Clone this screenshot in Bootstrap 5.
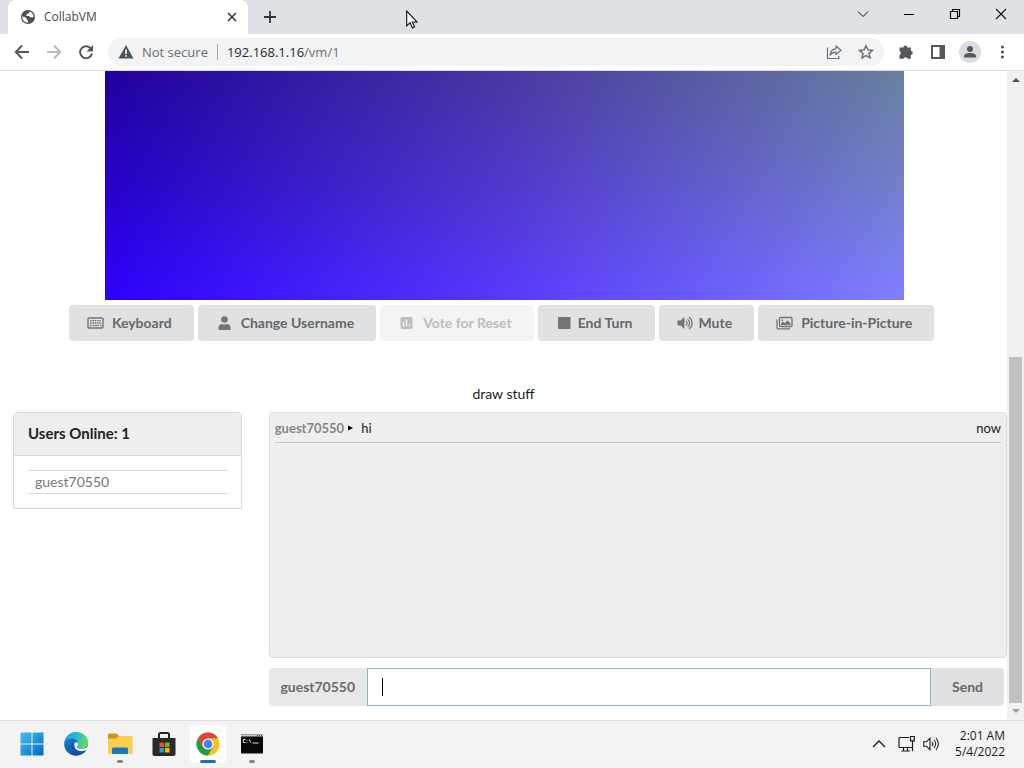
<!DOCTYPE html>
<html lang="en">
<head>
<meta charset="utf-8">
<meta name="viewport" content="width=device-width, initial-scale=1">
<title>CollabVM</title>
<link href="https://cdn.jsdelivr.net/npm/bootstrap@5.3.0/dist/css/bootstrap.min.css" rel="stylesheet">
<style>
  body { font-family: "Lato", sans-serif; font-size: 14px; line-height: 20px; color: #222; background: #fff; }
  svg { display: block; flex: none; }
  button { color: inherit; }
  .ui-font { font-family: "Open Sans", sans-serif; font-size: 12px; }
  .bare { border: 0; background: none; padding: 0; }

  /* browser window */
  .tabstrip { height: 34px; background: #dee1e6; padding-left: 8px; }
  .tab { width: 240px; height: 34px; background: #fff; border-radius: 8px 8px 0 0; padding: 0 10px 0 12px; color: #45494d; }
  .new-tab { margin-left: 15px; color: #333; }
  .caption { gap: 34px; padding: 0 17px 6px 0; color: #111; }
  .toolbar { height: 37px; border-bottom: 1px solid #d9dbde; padding: 0 18px 0 14px; color: #54585c; }
  .address { height: 28px; background: #f1f3f4; border-radius: 14px; padding: 0 10px; margin: 0 14px; font-size: 13px; color: #6b6f73; }
  .address .rule { width: 1px; height: 16px; background: #a5a8ab; margin: 0 9px; }
  .address b { font-weight: 400; color: #26292c; }
  .profile { width: 22px; height: 22px; background: #dadce0; margin: 0 17px 0 13px; }
  .pointer { left: 406px; top: 10px; z-index: 5; }

  /* page */
  .screen { width: calc(100% - 208px); height: 229px; margin-left: 105px; position: relative; background: linear-gradient(90deg, #3000ff, #583aff 50%, #8080ff); }
  .screen::before { content: ""; position: absolute; inset: 0; background: linear-gradient(90deg, #20009c, #4838a0 50%, #6880a0);
    -webkit-mask-image: linear-gradient(#000, rgba(0,0,0,.55) 50%, transparent); mask-image: linear-gradient(#000, rgba(0,0,0,.55) 50%, transparent); }
  .actions { gap: 4px; margin-top: 5px; padding-right: 4px; }
  .act { display: flex; align-items: center; gap: 8px; height: 36px; border: 0; border-radius: 4px; background: #e0e1e2; color: #666768; font-weight: 700; padding: 0 22px 0 18px; white-space: nowrap; }
  .act svg { color: #737475; }
  .act.tight { gap: 5px; }
  .act:disabled, .act:disabled svg { background: #f4f4f4; color: #bcbdbd; }
  .topic { margin-top: 43px; margin-bottom: 8px; }
  .col-users { padding-left: 13px; padding-right: 10px; }
  .col-chat { padding-left: 17px; padding-right: 0; }
  .users { border: 1px solid #d4d8d6; border-radius: 4px 4px 0 0; }
  .users h2 { font-size: 15px; line-height: 20px; font-weight: 700; margin: 0; padding: 10px 14px 12px; background: #eee; border-bottom: 1px solid #d4d8d6; }
  .users ul { padding: 14px 13px 14px 14px; color: #777; }
  .users li { border: 1px solid #d8d8d8; border-width: 1px 0; padding: 1px 7px; }
  .chat { height: 246px; background: #eee; border: 1px solid #dcdcdc; border-radius: 4px; padding: 5px; }
  .msg { border-bottom: 1px solid #c4c4c4; padding-bottom: 4px; font-size: 13px; }
  .msg b { color: #868686; }
  .entry { height: 38px; margin: 10px 3px 0 0; }
  .entry label { width: 98px; background: #e8e8e8; border-radius: 4px 0 0 4px; color: #6a6a6a; font-weight: 700; display: flex; align-items: center; justify-content: center; }
  .entry input { border: 1px solid #8fb5c8; outline: 0; padding: 0 14px; width: 100%; height: 100%; }
  .caret { left: 15px; top: 10px; width: 1px; height: 18px; background: #000; }
  .send { width: 73px; background: #e0e1e2; border: 0; border-radius: 0 4px 4px 0; color: #666768; font-weight: 700; }
  .scroll { width: 17px; background: #f1f1f1; padding: 6px 2px 6px; }
  .scroll .before { flex: 275 0 0; }
  .scroll .thumb { flex: 347 0 0; background: #c1c1c1; align-self: stretch; margin-bottom: 5px; }

  /* taskbar */
  .taskbar { height: 48px; background: #f3f3f3; border-top: 1px solid #dfdfdf; padding: 0 19px 1px 14px; color: #1c1c1c; }
  .app { width: 36px; height: 38px; border-radius: 4px; position: relative; display: flex; align-items: center; justify-content: center; }
  .app.on { background: #fff; }
  .app i { position: absolute; bottom: 0; width: 6px; height: 3px; border-radius: 2px; background: #858585; }
  .app.on i { width: 16px; background: #1273bd; }
  .clock { line-height: 16px; margin-left: 15px; }
</style>
</head>
<body class="vh-100 d-flex flex-column overflow-hidden position-relative">

<header class="ui-font">
  <div class="tabstrip d-flex align-items-center">
    <div class="tab d-flex align-items-center">
      <svg width="16" height="16" viewBox="0 0 16 16"><circle cx="8" cy="8" r="7" fill="#4d5155"/><path d="M2.200 7.500c2 0 4 .8 4.300 2.200.3 1.300 1.500 1 1.500 2.200v1.800C5 13.700 2.200 11 2.200 7.500ZM9.500 2.500c-.2 1.500-.7 1.800-2 2.200-1 .4-.6 1.300-1.700 1.500 1.300.8 3.400.4 4.200 1.600.8 1 2.500.4 3.700.2-.2-2.700-1.700-4.700-4.200-5.500Z" fill="#fff"/></svg>
      <span class="ms-2">CollabVM</span>
      <button class="bare ms-auto" aria-label="Close tab"><svg width="12" height="12" viewBox="0 0 12 12" stroke="#33373a" stroke-width="1.600"><path d="M2 2l8 8M10 2l-8 8"/></svg></button>
    </div>
    <button class="bare new-tab" aria-label="New tab"><svg width="14" height="14" viewBox="0 0 14 14" stroke="currentColor" stroke-width="1.800"><path d="M7 1v12M1 7h12"/></svg></button>
    <div class="caption d-flex align-items-center ms-auto">
      <button class="bare" aria-label="Search tabs"><svg width="12" height="12" viewBox="0 0 12 12" fill="none" stroke="currentColor"><path d="M1 3.500l5 5 5-5"/></svg></button>
      <button class="bare" aria-label="Minimize"><svg width="12" height="12" viewBox="0 0 12 12"><path d="M1 6h10v1H1z"/></svg></button>
      <button class="bare" aria-label="Restore"><svg width="12" height="12" viewBox="0 0 12 12" fill="none" stroke="currentColor" stroke-width="1.200"><path d="M1.500 3.500h7v7h-7zM3.500 3.500v-2h7v7h-2"/></svg></button>
      <button class="bare" aria-label="Close"><svg width="12" height="12" viewBox="0 0 12 12" stroke="currentColor" stroke-width="1.100"><path d="M1 1l10 10M11 1L1 11"/></svg></button>
    </div>
  </div>
  <div class="toolbar d-flex align-items-center">
    <div class="d-flex gap-3">
      <button class="bare" aria-label="Back"><svg width="16" height="16" viewBox="0 0 16 16" fill="none" stroke="currentColor" stroke-width="1.900"><path d="M15 8H2M8 1.500L1.800 8 8 14.500"/></svg></button>
      <button class="bare" aria-label="Forward"><svg width="16" height="16" viewBox="0 0 16 16" fill="none" stroke="#b9bbbd" stroke-width="1.900"><path d="M1 8h13M8 1.500L14.200 8 8 14.500"/></svg></button>
      <button class="bare" aria-label="Reload"><svg width="16" height="16" viewBox="0 0 16 16"><path d="M13.200 5A6 6 0 1 0 14 9.500" fill="none" stroke="currentColor" stroke-width="2"/><path d="M15 1v6.500H8.500z" fill="currentColor"/></svg></button>
    </div>
    <div class="address d-flex align-items-center flex-grow-1">
      <svg width="16" height="16" viewBox="0 0 16 16"><path d="M8 1l7.500 13.500H.5z" fill="#4f5357"/><path d="M7.200 5.500h1.600v4.500H7.200zM7.200 11.200h1.600v1.600H7.200z" fill="#fff"/></svg>
      <span class="ms-2">Not secure</span><span class="rule"></span><span><b>192.168.1.16</b>/vm/1</span>
      <button class="bare ms-auto me-3" aria-label="Share"><svg width="16" height="16" viewBox="0 0 16 16" fill="none" stroke="currentColor" stroke-width="1.200"><path d="M1.500 3.500v11h11.300V12M10 2l5 4.300-5 4.200V8.200C7.500 8.200 5.500 9 4 11.200c.3-3.600 2.500-6 6-6.600z" stroke-linejoin="round"/></svg></button>
      <button class="bare" aria-label="Bookmark"><svg width="16" height="16" viewBox="0 0 16 16" fill="none" stroke="currentColor" stroke-width="1.500"><path d="M8 1.800l1.900 4.100 4.500.5-3.400 3 1 4.400L8 11.600l-4 2.200 1-4.400-3.400-3 4.500-.5z"/></svg></button>
    </div>
    <div class="d-flex align-items-center">
      <button class="bare" aria-label="Extensions"><svg width="16" height="16" viewBox="0 0 16 16" fill="currentColor"><path d="M1.500 3.500h3.800a2 2 0 1 1 4 0h3.500V7a2 2 0 1 1 0 4v3.700H9.500a2 2 0 0 0-3.900 0H1.500V11a2 2 0 0 0 0-3.800z"/></svg></button>
      <button class="bare ms-3" aria-label="Side panel"><svg width="16" height="16" viewBox="0 0 16 16"><path d="M1 1h14v14H1zM3 3v10h6.500V3z" fill="currentColor" fill-rule="evenodd"/></svg></button>
      <button class="bare profile rounded-circle d-flex align-items-center justify-content-center" aria-label="Profile"><svg width="14" height="14" viewBox="0 0 14 14" fill="#505860"><circle cx="7" cy="4" r="3"/><path d="M1 12.500V11c0-4 12-4 12 0v1.500z"/></svg></button>
      <button class="bare" aria-label="Menu"><svg width="8" height="16" viewBox="0 0 8 16" fill="currentColor"><circle cx="4.500" cy="3" r="1.600"/><circle cx="4.500" cy="8" r="1.600"/><circle cx="4.500" cy="13" r="1.600"/></svg></button>
    </div>
  </div>
</header>

<div class="flex-grow-1 d-flex overflow-hidden">
  <main class="flex-grow-1 overflow-hidden">
    <div class="screen"></div>
    <div class="actions d-flex justify-content-center">
      <button class="act"><svg width="17" height="14" viewBox="0 0 17 14" fill="none" stroke="currentColor"><rect x="1" y="2" width="15" height="10" rx="1" stroke-width="1.400"/><path d="M3 4.700h11M3 7h11M3 9.500h2M6 9.500h6M13 9.500h1.500" stroke-width="1.300" stroke-dasharray="1.600 .7"/></svg>Keyboard</button>
      <button class="act"><svg width="17" height="14" viewBox="0 0 17 14" fill="currentColor"><circle cx="8.500" cy="3.500" r="3.300"/><path d="M2.500 14v-2.500c0-2 1.500-3.500 3.500-3.500 1.500.7 3.500.7 5 0 2 0 3.500 1.500 3.500 3.500V14z"/></svg>Change Username</button>
      <button class="act" disabled><svg width="17" height="14" viewBox="0 0 17 14"><rect x="2.500" y="1" width="12" height="12" rx="1.500" fill="currentColor"/><path d="M5.500 6v4.500M8.500 3.500v7M11.500 8v2.500" stroke="#f4f4f4" stroke-width="1.500"/></svg>Vote for Reset</button>
      <button class="act tight"><svg width="17" height="14" viewBox="0 0 17 14"><rect x="2" y="1" width="12.500" height="12" rx=".5" fill="currentColor"/></svg>End Turn</button>
      <button class="act tight"><svg width="17" height="14" viewBox="0 0 17 14" fill="none" stroke="currentColor"><path d="M.5 4.500h3L7.500 1v12l-4-3.500h-3z" fill="currentColor" stroke="none"/><path d="M9 5a2.500 2.500 0 0 1 0 4M10.500 3a5 5 0 0 1 0 8M12 1a7.500 7.500 0 0 1 0 12" stroke-width="1.200"/></svg>Mute</button>
      <button class="act"><svg width="17" height="14" viewBox="0 0 17 14" fill="none" stroke="currentColor" stroke-width="1.300"><rect x="3.500" y="1.500" width="12.500" height="9" rx="1"/><path d="M1 3.500v8c0 .8.400 1.300 1.200 1.300H14"/><path d="M5 9V7.500l2-2 1.500 1.500L11.500 4.500l3 2.500v2z" fill="currentColor" stroke="none"/><circle cx="6.300" cy="4.200" r=".9" fill="currentColor" stroke="none"/></svg>Picture-in-Picture</button>
    </div>
    <p class="topic text-center">draw stuff</p>
    <div class="row g-0">
      <div class="col-3 col-users">
        <section class="users">
          <h2>Users Online: 1</h2>
          <ul class="list-unstyled mb-0"><li>guest70550</li></ul>
        </section>
      </div>
      <div class="col-9 col-chat">
        <div class="chat">
          <div class="msg d-flex align-items-center"><b>guest70550</b>
            <svg class="ms-1 me-2" width="5" height="6" viewBox="0 0 5 6"><path d="M0 .5L5 3 0 5.500z"/></svg>
            <span>hi</span><span class="ms-auto">now</span></div>
        </div>
        <form class="entry d-flex">
          <label for="line">guest70550</label>
          <div class="flex-grow-1 position-relative"><input id="line" type="text" autocomplete="off"><span class="caret position-absolute"></span></div>
          <button class="send" type="button">Send</button>
        </form>
      </div>
    </div>
  </main>
  <div class="scroll d-flex flex-column align-items-center">
    <svg width="8" height="6" viewBox="0 0 8 6"><path d="M4 1l4 4H0z" fill="#505050"/></svg>
    <div class="before"></div><div class="thumb"></div>
    <svg width="8" height="6" viewBox="0 0 8 6"><path d="M4 5l4-4H0z" fill="#a0a0a0"/></svg>
  </div>
</div>

<footer class="taskbar ui-font d-flex align-items-center">
  <div class="d-flex gap-2">
    <button class="bare app" aria-label="Start"><svg width="24" height="24" viewBox="0 0 24 24"><defs><linearGradient id="w" x2="1" y2="1"><stop stop-color="#45c0f0"/><stop offset="1" stop-color="#0068c8"/></linearGradient></defs><path d="M.5.500h11v11H.5zM12.500.500h11v11h-11zM.5 12.500h11v11H.5zM12.500 12.500h11v11h-11z" fill="url(#w)"/></svg></button>
    <button class="bare app" aria-label="Edge"><svg width="24" height="24" viewBox="0 0 24 24"><defs><linearGradient id="e1" x2="1" y2=".3"><stop stop-color="#1ba0e8"/><stop offset=".55" stop-color="#2bbbd0"/><stop offset="1" stop-color="#62d86a"/></linearGradient><linearGradient id="e2" x2=".6" y2="1"><stop stop-color="#1b90dc"/><stop offset="1" stop-color="#0b4a9c"/></linearGradient></defs><circle cx="12" cy="12" r="11.800" fill="url(#e2)"/><path d="M.3 11C1.200 4.500 6 .2 12.200.2 19 .2 24 5 24 10.500c0 4-3 6.500-6.500 6.500-2.800 0-4.600-1-4.600-2 0-.8 1.300-1.200 1.300-3.300C14.200 8.500 11 6.500 7.500 6.500 4 6.500 1.500 8.500.3 11z" fill="url(#e1)"/><path d="M8.500 11c-2 5 1 10 7 11.700 3-.9 5.600-2.500 7-4.800-5.500 3.500-12 .5-12-4z" fill="#164f9d"/><path d="M10.500 11.200c-1 3.800 1.500 7.500 6 7.900 2.500.2 4.800-.4 6.700-1.600l.8.500V14c-1.500 2-3.800 3-6.500 3-2.800 0-4.600-1-4.600-2 0-.8 1.300-1.200 1.300-3.300 0-1.500-3-2.300-3.700-.5z" fill="#f3f3f3"/></svg></button>
    <button class="bare app" aria-label="File Explorer"><svg width="26" height="24" viewBox="0 0 26 24"><path d="M1 3c0-1 .5-1.500 1.500-1.500h7L12 4v3H1z" fill="#d79012"/><path d="M1 6.500h8.500L12 4h12c.8 0 1.500.5 1.500 1.500V22H2.500C1.500 22 1 21.500 1 20.500z" fill="#f8cf4a"/><path d="M5 17c0-1 .5-1.500 1.500-1.500h13c1 0 1.500.5 1.500 1.500v5H5z" fill="#1d78c0"/></svg><i></i></button>
    <button class="bare app" aria-label="Store"><svg width="24" height="26" viewBox="0 0 24 26"><path d="M7 7V3.500C7 2.600 7.600 2 8.500 2h7c.9 0 1.500.6 1.500 1.500V7" fill="none" stroke="#222" stroke-width="2"/><path d="M.5 7h23v16c0 1-.7 2-2 2h-19c-1.300 0-2-1-2-2z" fill="#292929"/><path d="M7.500 11.500H12V16H7.500z" fill="#f2502a"/><path d="M13 11.500h4.500V16H13z" fill="#7fba00"/><path d="M7.500 17H12v4.500H7.500z" fill="#12a4ee"/><path d="M13 17h4.500v4.500H13z" fill="#ffb900"/></svg></button>
    <button class="bare app on" aria-label="Chrome"><svg width="24" height="24" viewBox="0 0 24 24"><circle cx="12" cy="12" r="11.500" fill="#fbc116"/><path d="M2.040 6.250A11.500 11.500 0 0 1 21.960 6.250H12L7 15z" fill="#dc4437"/><path d="M2.040 6.250A11.500 11.500 0 0 0 12 23.500l5-8.600-10 0z" fill="#26994c"/><circle cx="12" cy="12" r="5.600" fill="#fff"/><circle cx="12" cy="12" r="4.400" fill="#4285f4"/></svg><i></i></button>
    <button class="bare app" aria-label="Command Prompt"><svg width="24" height="20" viewBox="0 0 24 20"><path d="M1 .500h22v19H1z" fill="#080808"/><path d="M1 .500h22v2H1z" fill="#c8c8c8"/><path d="M17 1h1v1h-1zM19 1h1v1h-1zM21 1h1v1h-1z" fill="#444"/><path d="M5.500 5.500H3.300v3h2.200M7 6v.8M7 8v.7M9 5.300l1.800 3.400M12.500 9h6" fill="none" stroke="#ddd"/></svg><i></i></button>
  </div>
  <div class="ms-auto d-flex align-items-center">
    <button class="bare" aria-label="Hidden icons"><svg width="14" height="14" viewBox="0 0 14 14" fill="none" stroke="currentColor" stroke-width="1.300"><path d="M1 10l6-6 6 6"/></svg></button>
    <button class="bare d-flex align-items-center gap-2 ms-2 ps-1" aria-label="Network and volume">
      <svg width="17" height="18" viewBox="0 0 17 18" fill="none" stroke="currentColor" stroke-width="1.200"><path d="M11 2.500H2c-.8 0-1 .4-1 1v8c0 .7.400 1 1 1h12.500M5.500 12.500v3.300M9.500 12.500v3.300M3.500 16h8.500M12.500 1.500h3.800v4.300h-3.800zM14.500 6v10"/></svg>
      <svg width="17" height="16" viewBox="0 0 17 16" fill="none" stroke="currentColor" stroke-width="1.100"><path d="M.8 5.800h2.500L7 2.300v11.400l-3.700-3.500H.8zM9 6a3 3 0 0 1 0 4M11 4a6 6 0 0 1 0 8M13 2a9 9 0 0 1 0 12"/></svg>
    </button>
    <div class="clock text-end">2:01 AM<br>5/4/2022</div>
  </div>
</footer>

<svg class="pointer position-absolute" width="12" height="19" viewBox="0 0 12 19"><path d="M.7 1v15l3.400-3.300 2.300 5.400 2.200-1-2.300-5.100h4.800z" fill="#fff" stroke="#111" stroke-width="1.100"/></svg>

<script src="https://cdn.jsdelivr.net/npm/bootstrap@5.3.0/dist/js/bootstrap.bundle.min.js"></script>
</body>
</html>
